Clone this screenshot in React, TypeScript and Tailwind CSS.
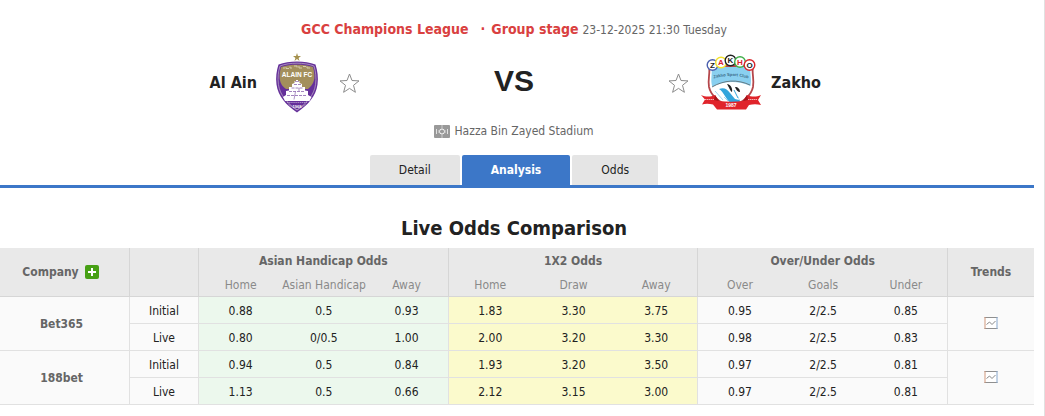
import { clsx } from "clsx"

const COMPANIES = [
  {
    name: "Bet365",
    rows: [
      { type: "Initial", odds: ["0.88", "0.5", "0.93", "1.83", "3.30", "3.75", "0.95", "2/2.5", "0.85"] },
      { type: "Live", odds: ["0.80", "0/0.5", "1.00", "2.00", "3.20", "3.30", "0.98", "2/2.5", "0.83"] },
    ],
  },
  {
    name: "188bet",
    rows: [
      { type: "Initial", odds: ["0.94", "0.5", "0.84", "1.93", "3.20", "3.50", "0.97", "2/2.5", "0.81"] },
      { type: "Live", odds: ["1.13", "0.5", "0.66", "2.12", "3.15", "3.00", "0.97", "2/2.5", "0.81"] },
    ],
  },
]

const SUB_HEADS = ["Home", "Asian Handicap", "Away", "Home", "Draw", "Away", "Over", "Goals", "Under"]

const GROUP_BG = ["bg-[#ecf8ed]", "bg-[#fbfacc]", "bg-[#fafafa]"]

const AlAinCrest = () => (
  <svg width="44" height="62" viewBox="0 0 44 62" role="img" aria-label="Al Ain crest">
    <path d="M22 1l1 3h3l-2.400 1.900.9 3-2.500-1.800-2.500 1.800.9-3L18 4h3z" fill="#a5914f" />
    <path
      d="M3.500 12.500C9 10.500 15 9.500 22 9.500s13 1 18.500 3c2 6 3 13 2 20C41 44 33 53 22 60.500 11 53 3 44 1.500 32.500c-1-7 0-14 2-20z"
      fill="#65309a"
    />
    <path
      d="M5 14c5-2 11-2.800 17-2.800S34 12 39 14c1.700 5.500 2.500 12 1.600 18.300C39.200 43 32 51 22 58 12 51 4.800 43 3.400 32.300 2.500 26 3.300 19.500 5 14z"
      fill="none"
      stroke="#b8a3c4"
      strokeWidth="0.800"
    />
    <path d="M6 15c5-1.700 10.500-2.300 16-2.300s11 .6 16 2.300c1.300 5 1.700 9 1.300 12-1 5-4 8-6.300 10H11c-3-2-5.500-5-6.300-10-.4-4 0-7 1.300-12z" fill="#a38f5c" />
    <path d="M8 16h2m1-1v1.500h3m1-2v1.500h2m2-2h3v1.500m2-1.500v2h3m1-1.500h3m1 0v1.500h3" stroke="#d6ccae" strokeWidth="1" fill="none" />
    <text x="22" y="24.500" textAnchor="middle" fontSize="6.500" fontWeight="700" fill="#fff" fontFamily="Liberation Sans, sans-serif">
      ALAIN FC
    </text>
    <path
      d="M19.500 31v-2h1.500v-1h2v1h1.500v2l2.500 1v3h3v3.500l3 .5v4l3.500 2-2 4H10l-2-4 3-2v-4l3-.500V35h3v-3z"
      fill="#fff"
    />
    <path d="M19 32.500h7M16.500 36h11M14 39.500h16M12 43.500h20" stroke="#8b66ae" strokeWidth="0.800" strokeDasharray="3 1" />
    <path d="M20 29.500h4M20.500 39.500l-1.500 8M24 36v3" stroke="#8b66ae" strokeWidth="0.700" />
    <path d="M12 50.500h20" stroke="#c6b0da" strokeWidth="0.700" strokeDasharray="1.500 .6" />
    <path d="M13.500 52.500L22 58l8.500-5.500" stroke="#b8a3c4" strokeWidth="0.700" fill="none" />
    <text x="22" y="55.500" textAnchor="middle" fontSize="4" fontWeight="700" fill="#fff" fontFamily="Liberation Sans, sans-serif">
      1968
    </text>
  </svg>
)

const ZAKHO_RINGS = [
  { letter: "Z", x: 11.5, y: 12, ring: "#4a5fae", fill: "#222" },
  { letter: "A", x: 20, y: 9.5, ring: "#f2e12c", fill: "#d8262c" },
  { letter: "K", x: 29.5, y: 7.5, ring: "#222", fill: "#222" },
  { letter: "H", x: 39, y: 9, ring: "#3fae49", fill: "#d8262c" },
  { letter: "O", x: 48.5, y: 12, ring: "#d8262c", fill: "#222" },
]

const ZakhoCrest = () => (
  <svg width="60" height="60" viewBox="0 0 60 60" role="img" aria-label="Zakho crest">
    <path d="M8 13h44c-1.500 7 1.500 13 0 21-2 9-9 15-22 20C17 49 10 43 8 34c-1.500-8 1.500-14 0-21z" fill="#fff" stroke="#b5474b" strokeWidth="1.800" />
    <path d="M10.500 14h39c-1 6 1.500 11 0 19-13-6-27-5-38 1-2.500-7 0-12-1-20z" fill="#8ad0f0" />
    <path d="M11 34c12-7 25-8 38-2" fill="none" stroke="#555" strokeWidth="0.700" />
    <path id="club-arc" d="M13 25.500q17-5 34 0" fill="none" />
    <text fontSize="4.200" fontWeight="700" fill="#3d6f8c" fontFamily="Liberation Sans, sans-serif">
      <textPath href="#club-arc" startOffset="50%" textAnchor="middle">
        Zakho Sport Club
      </textPath>
    </text>
    <path d="M18 36c5-2 8 0 11 4l5 6 4 1-1-4 3 8-10-1c-5-3-7-11-12-14z" fill="#32a5dc" />
    <path d="M14 38l8 9M23 44l4 4" stroke="#9fd6ef" strokeWidth="1" />
    <path d="M26 31c3 0 6 4 5 8-2-1-3-5-5-8zM34 34c3 0 5 2 5 5-2 0-4-2-5-5z" fill="#222" />
    <path d="M33 37l4 8" stroke="#32a5dc" strokeWidth="1" />
    <path d="M0 42c5 2 9 2 14 0l4 6c8 1 16 1 24 0l4-6c5 2 9 2 14 0l-3 5 3 5c-4-1-8-1-12 0l-3 4.500H16L12 51.500c-4-1-8-1-11 0l3-5z" fill="#e0242b" />
    <path d="M14 42l-1 5 5 1zM46 42l1 5-5 1z" fill="#a3151b" />
    <path d="M4 46.500h9M47 46.500h9" stroke="#f6b0b2" strokeWidth="1" strokeDasharray="1.500 .5" />
    <text x="30" y="54" textAnchor="middle" fontSize="5" fontWeight="700" fill="#fff" fontFamily="Liberation Sans, sans-serif">
      1987
    </text>
    {ZAKHO_RINGS.map(({ letter, x, y, ring, fill }) => (
      <g key={letter}>
        <circle cx={x} cy={y} r="5.300" fill="#fff" stroke={ring} strokeWidth="1.400" />
        <text x={x} y={y + 2.8} textAnchor="middle" fontSize="8" fontWeight="700" fill={fill} fontFamily="Liberation Sans, sans-serif">
          {letter}
        </text>
      </g>
    ))}
  </svg>
)

const FavouriteButton = ({ team }: { team: string }) => (
  <button type="button" aria-label={`Follow ${team}`} className="cursor-pointer">
    <svg width="21" height="21" viewBox="0 0 21 21" fill="none" stroke="#8c8c8c">
      <path d="M10.500 1l2.500 6.500 7 .4-5.500 4.400 1.900 7-5.900-3.900-5.900 3.900 1.900-7L1 7.900l7-.4z" />
    </svg>
  </button>
)

const StadiumIcon = () => (
  <svg width="16" height="13" viewBox="0 0 16 13" aria-hidden="true">
    <rect width="16" height="13" rx="1" fill="#999" />
    <g fill="none" stroke="#fff">
      <circle cx="8" cy="6.500" r="2.500" strokeOpacity="0.900" />
      <path d="M8 0v3.500M8 9.500V13" strokeOpacity="0.500" />
      <path d="M2.500 4v5M13.500 4v5" strokeOpacity="0.700" />
      <path d="M4.500 5v3M11.500 5v3" strokeOpacity="0.300" />
    </g>
  </svg>
)

const TrendIcon = () => (
  <svg width="14" height="14" viewBox="0 0 14 14" fill="none">
    <rect x="1" y="1" width="12" height="12" fill="#fff" />
    <path d="M.5 1.500h13M.5 12.500h13" stroke="#8f8f8f" />
    <path d="M1 1v12" stroke="#d0987c" />
    <path d="M13 1v12" stroke="#86a6cc" />
    <path d="M2.500 8.500L5.500 6l2.500 2.500L11.500 5" stroke="#888" />
  </svg>
)

const Tab = ({ label, active }: { label: string; active?: boolean }) => (
  <a
    href="#"
    aria-current={active ? "page" : undefined}
    className={clsx(
      "rounded-t-xs px-[29px] leading-[30px]",
      active ? "bg-[#3c77c8] font-bold text-white" : "bg-[#e5e5e5] text-[#222]"
    )}
  >
    {label}
  </a>
)

const MatchHeader = () => (
  <header className="pr-[6px] text-xs text-[#666]">
    <div className="flex items-baseline justify-center pt-[19px] leading-5">
      <a href="#" className="text-sm leading-5 font-bold text-[#d94040]">
        GCC Champions League
      </a>
      <span className="mr-[6px] ml-3 text-sm leading-5 font-bold text-[#d94040]">·</span>
      <a href="#" className="mr-1 text-sm leading-5 font-bold text-[#d94040]">
        Group stage
      </a>
      <span>23-12-2025 21:30 Tuesday</span>
    </div>

    <div className="mt-[11px] grid h-16 grid-cols-[1fr_308px_1fr] items-center">
      <div className="flex items-center justify-end">
        <span className="text-base font-bold text-[#222]">Al Ain</span>
        <span className="mr-5 ml-[18px]">
          <AlAinCrest />
        </span>
        <FavouriteButton team="Al Ain" />
      </div>
      <div className="pb-1 text-center font-[Liberation_Sans,sans-serif] text-3xl font-bold text-[#222]">VS</div>
      <div className="flex items-center">
        <FavouriteButton team="Zakho" />
        <span className="mr-[10px] ml-3">
          <ZakhoCrest />
        </span>
        <span className="text-base font-bold text-[#222]">Zakho</span>
      </div>
    </div>

    <div className="mt-[6px] flex h-5 items-center justify-center gap-1">
      <StadiumIcon />
      <span>Hazza Bin Zayed Stadium</span>
    </div>
  </header>
)

const OddsTable = () => (
  <table className="w-full table-fixed border-separate border-spacing-0 text-center text-xs text-[#222]">
    <colgroup>
      <col className="w-[130px]" />
      <col className="w-[69px]" />
      {SUB_HEADS.map((_, i) => (
        <col key={i} />
      ))}
      <col className="w-[86px]" />
    </colgroup>
    <thead className="bg-[#e9e9e9] text-[#666]">
      <tr className="h-[25px]">
        <th rowSpan={2} className="border-r border-b border-[#d6d6d6]">
          <div className="flex items-center justify-center gap-[6px] pr-2">
            Company
            <button
              type="button"
              aria-label="Add company"
              className="flex size-[14px] cursor-pointer items-center justify-center rounded-xs bg-[#47a015]"
            >
              <svg width="8" height="8" viewBox="0 0 8 8" stroke="#fff" strokeWidth="2">
                <path d="M4 0v8M0 4h8" />
              </svg>
            </button>
          </div>
        </th>
        <th rowSpan={2} className="border-r border-b border-[#d6d6d6]" />
        {["Asian Handicap Odds", "1X2 Odds", "Over/Under Odds"].map((title) => (
          <th key={title} colSpan={3} className="border-r border-[#d6d6d6]">
            {title}
          </th>
        ))}
        <th rowSpan={2} className="border-b border-[#d6d6d6]">
          Trends
        </th>
      </tr>
      <tr className="h-6 text-[#8a8a8a]">
        {SUB_HEADS.map((label, i) => (
          <th
            key={i}
            className={clsx("border-b border-[#d6d6d6] font-normal whitespace-nowrap", i % 3 === 2 && "border-r")}
          >
            {label}
          </th>
        ))}
      </tr>
    </thead>
    <tbody>
      {COMPANIES.map((company) =>
        company.rows.map((row, rowIndex) => (
          <tr key={company.name + row.type} className="h-[27px] bg-[#fafafa]">
            {rowIndex === 0 && (
              <th rowSpan={2} className="border-r border-b border-[#e1e1e1] pr-[6px] text-[#666]">
                {company.name}
              </th>
            )}
            <td className="border-r border-b border-[#e1e1e1] pt-0.5">{row.type}</td>
            {row.odds.map((value, i) => (
              <td
                key={i}
                className={clsx(
                  "border-b border-[#e1e1e1] pt-0.5",
                  GROUP_BG[Math.floor(i / 3)],
                  i % 3 === 2 && "border-r"
                )}
              >
                {value}
              </td>
            ))}
            {rowIndex === 0 && (
              <td rowSpan={2} className="border-b border-[#e1e1e1] pb-0.5">
                <a href="#" aria-label={`${company.name} trends`} className="flex justify-center">
                  <TrendIcon />
                </a>
              </td>
            )}
          </tr>
        ))
      )}
    </tbody>
  </table>
)

export default function App() {
  return (
    <div className="min-h-screen border-r border-[#e1e1e1] bg-white pr-[10px] font-[DejaVu_Sans_Condensed,Noto_Sans,sans-serif]">
      <MatchHeader />
      <nav className="mt-[14px] flex justify-center gap-0.5 border-b-3 border-[#3c77c8] pr-[6px] text-xs">
        <Tab label="Detail" />
        <Tab label="Analysis" active />
        <Tab label="Odds" />
      </nav>
      <main>
        <h2 className="pt-[26px] pr-[6px] pb-[6px] text-center text-xl leading-7 font-bold text-[#222]">
          Live Odds Comparison
        </h2>
        <OddsTable />
      </main>
    </div>
  )
}
